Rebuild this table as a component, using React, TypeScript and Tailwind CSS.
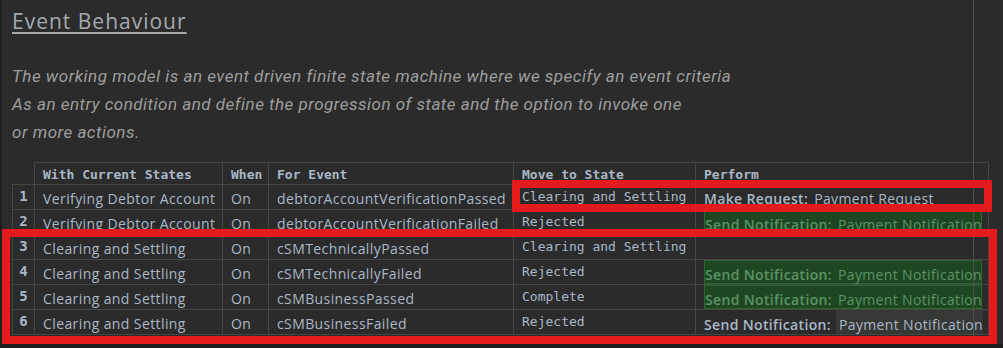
import React from "react";

const MONO = { fontFamily: '"DejaVu Sans Mono", "Liberation Mono", monospace' };
const SANS = { fontFamily: '"Open Sans", "Noto Sans", sans-serif' };
const ITAL = { fontFamily: 'Roboto, "Noto Sans", sans-serif' };

type Perform =
  | { kind: "none" }
  | { kind: "plain"; label: string; value: string }
  | { kind: "green"; label: string; value: string }
  | { kind: "mixed"; label: string; value: string };

const rows: { n: number; state: string; event: string; move: string; perform: Perform }[] = [
  { n: 1, state: "Verifying Debtor Account", event: "debtorAccountVerificationPassed", move: "Clearing and Settling", perform: { kind: "plain", label: "Make Request:", value: "Payment Request" } },
  { n: 2, state: "Verifying Debtor Account", event: "debtorAccountVerificationFailed", move: "Rejected", perform: { kind: "green", label: "Send Notification:", value: "Payment Notification" } },
  { n: 3, state: "Clearing and Settling", event: "cSMTechnicallyPassed", move: "Clearing and Settling", perform: { kind: "none" } },
  { n: 4, state: "Clearing and Settling", event: "cSMTechnicallyFailed", move: "Rejected", perform: { kind: "green", label: "Send Notification:", value: "Payment Notification" } },
  { n: 5, state: "Clearing and Settling", event: "cSMBusinessPassed", move: "Complete", perform: { kind: "green", label: "Send Notification:", value: "Payment Notification" } },
  { n: 6, state: "Clearing and Settling", event: "cSMBusinessFailed", move: "Rejected", perform: { kind: "mixed", label: "Send Notification:", value: "Payment Notification" } },
];

function PerformCell({ p }: { p: Perform }) {
  if (p.kind === "none") return <td className="border border-[#464646] p-0" />;
  if (p.kind === "plain")
    return (
      <td className="border border-[#464646] px-2 pt-[4px] text-[14px] leading-[20px] tracking-[0.35px] text-[#a9b7c6] whitespace-nowrap" style={SANS}>
        <span className="font-semibold">{p.label}</span>
        <span className="ml-[6px]">{p.value}</span>
      </td>
    );
  if (p.kind === "green")
    return (
      <td className="border border-[#464646] pl-2 pr-[6px] py-0">
        <div
          className="h-[24px] bg-[#1e4721] border border-[#2a672d] flex items-center pt-[5px] text-[14px] leading-[18px] tracking-[0.35px] text-[#5a9367] whitespace-nowrap"
          style={SANS}
        >
          <span className="font-semibold">{p.label}</span>
          <span className="ml-[6px]">{p.value}</span>
        </div>
      </td>
    );
  return (
    <td className="border border-[#464646] pl-2 pr-[6px] py-0">
      <div className="h-[24px] flex items-stretch text-[14px] leading-[18px] tracking-[0.35px] text-[#a9b7c6] whitespace-nowrap" style={SANS}>
        <span className="font-semibold flex items-center pt-[5px]">{p.label}</span>
        <span className="ml-[5px] pl-[3px] flex-1 bg-[#363836] flex items-center pt-[5px]">{p.value}</span>
      </div>
    </td>
  );
}

export default function App() {
  return (
    <div className="relative w-[1003px] h-[348px] overflow-hidden bg-[#1f1f1f]">
      <div className="ml-[2px] w-[1001px] h-[344px] bg-[#2b2b2b] pl-[10px] pt-[5px]">
        <div
          className="text-[21px] leading-[32px] text-[#a4a9ae] underline underline-offset-[3px] decoration-[1.5px] tracking-[1px]"
          style={SANS}
        >
          Event Behaviour
        </div>
        <div className="mt-[25px] text-[17px] leading-[28px] italic text-[#9d9d9d] tracking-[0.5px]" style={ITAL}>
          <div>The working model is an event driven finite state machine where we specify an event criteria</div>
          <div>As an entry condition and define the progression of state and the option to invoke one</div>
          <div>or more actions.</div>
        </div>
        <table className="mt-[16px] table-fixed border-collapse w-[976px]">
          <colgroup>
            <col className="w-[22px]" />
            <col className="w-[188px]" />
            <col className="w-[46px]" />
            <col className="w-[245px]" />
            <col className="w-[182px]" />
            <col className="w-[293px]" />
          </colgroup>
          <thead>
            <tr className="h-[22px] text-left text-[13px] leading-[18px] font-bold text-[#a9b7c6]" style={MONO}>
              <th className="border-0 p-0" />
              <th className="border border-[#464646] px-2 pt-[2px] font-bold">With Current States</th>
              <th className="border border-[#464646] px-2 pt-[2px] font-bold">When</th>
              <th className="border border-[#464646] px-2 pt-[2px] font-bold">For Event</th>
              <th className="border border-[#464646] px-2 pt-[2px] font-bold">Move to State</th>
              <th className="border border-[#464646] px-2 pt-[2px] font-bold">Perform</th>
            </tr>
          </thead>
          <tbody>
            {rows.map((r) => (
              <tr key={r.n} className="h-[25px]">
                <td className="border border-[#464646] p-0 text-center align-top pt-[2px] text-[14px] leading-[18px] font-bold text-[#a9b7c6]" style={MONO}>
                  {r.n}
                </td>
                <td className="border border-[#464646] px-2 pt-[4px] text-[14px] leading-[20px] tracking-[0.4px] text-[#a9b7c6] whitespace-nowrap" style={SANS}>
                  {r.state}
                </td>
                <td className="border border-[#464646] px-2 pt-[4px] text-[14px] leading-[20px] tracking-[0.4px] text-[#a9b7c6]" style={SANS}>
                  On
                </td>
                <td className="border border-[#464646] px-2 pt-[4px] text-[14px] leading-[20px] tracking-[0.4px] text-[#a9b7c6] whitespace-nowrap" style={SANS}>
                  {r.event}
                </td>
                <td className="border border-[#464646] px-2 pb-[1px] text-[13px] leading-[18px] text-[#a9b7c6] whitespace-nowrap" style={MONO}>
                  {r.move}
                </td>
                <PerformCell p={r.perform} />
              </tr>
            ))}
          </tbody>
        </table>
      </div>

      {/* editor margin guide */}
      <div className="absolute left-[973px] top-0 w-px h-[344px] bg-[#4f4f4f]" />

      {/* red annotation boxes */}
      <div className="absolute left-[512px] top-[180px] w-[480px] h-[32px] border-[8px] border-[#e31b1c]" />
      <div className="absolute left-[2px] top-[229px] w-[995px] h-[115px] border-[8px] border-[#e31b1c]" />
    </div>
  );
}
